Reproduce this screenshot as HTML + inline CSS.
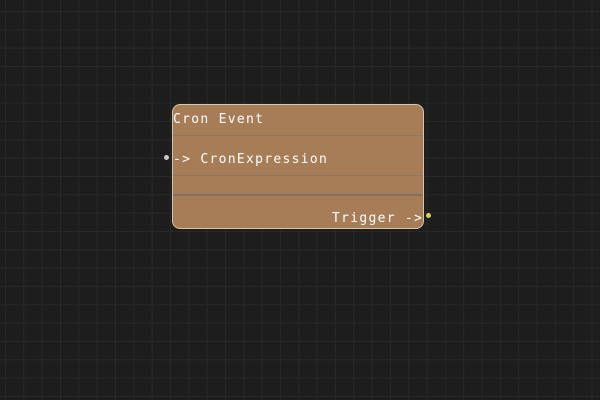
<!DOCTYPE html>
<html><head><style>
body{margin:0;width:600px;height:400px;overflow:hidden;background:#1d1d1d;
background-image:linear-gradient(#282828 1px,transparent 1px),linear-gradient(90deg,#282828 1px,transparent 1px);
background-size:18.33px 18.33px;background-position:5px 11px;position:relative;
font-family:"DejaVu Sans Mono","Liberation Mono",monospace;color:#fff;font-size:13px;letter-spacing:1.3px}
.node{position:absolute;left:172px;top:104px;width:250px;height:123px;background:#a67d57;border:1px solid #d8c4a8;border-radius:8px}
.l{position:absolute;left:0;right:0;height:1px;background:#8e7663}
.t{position:absolute;white-space:nowrap;line-height:14px}
.dot{position:absolute;width:5px;height:5px;border-radius:50%}
</style></head><body>
<div class="node">
<div class="l" style="top:30px"></div>
<div class="l" style="top:70px"></div>
<div class="l" style="top:89px;background:#7f7060;height:2px"></div>
</div>
<div class="t" style="left:173px;top:113px">Cron Event</div>
<div class="t" style="left:173px;top:153px">-&gt; CronExpression</div>
<div class="t" style="left:332px;top:212px">Trigger -&gt;</div>
<div class="dot" style="left:164px;top:155px;background:#c8c8c8"></div>
<div class="dot" style="left:426px;top:213px;background:#d8d060"></div>
</body></html>
